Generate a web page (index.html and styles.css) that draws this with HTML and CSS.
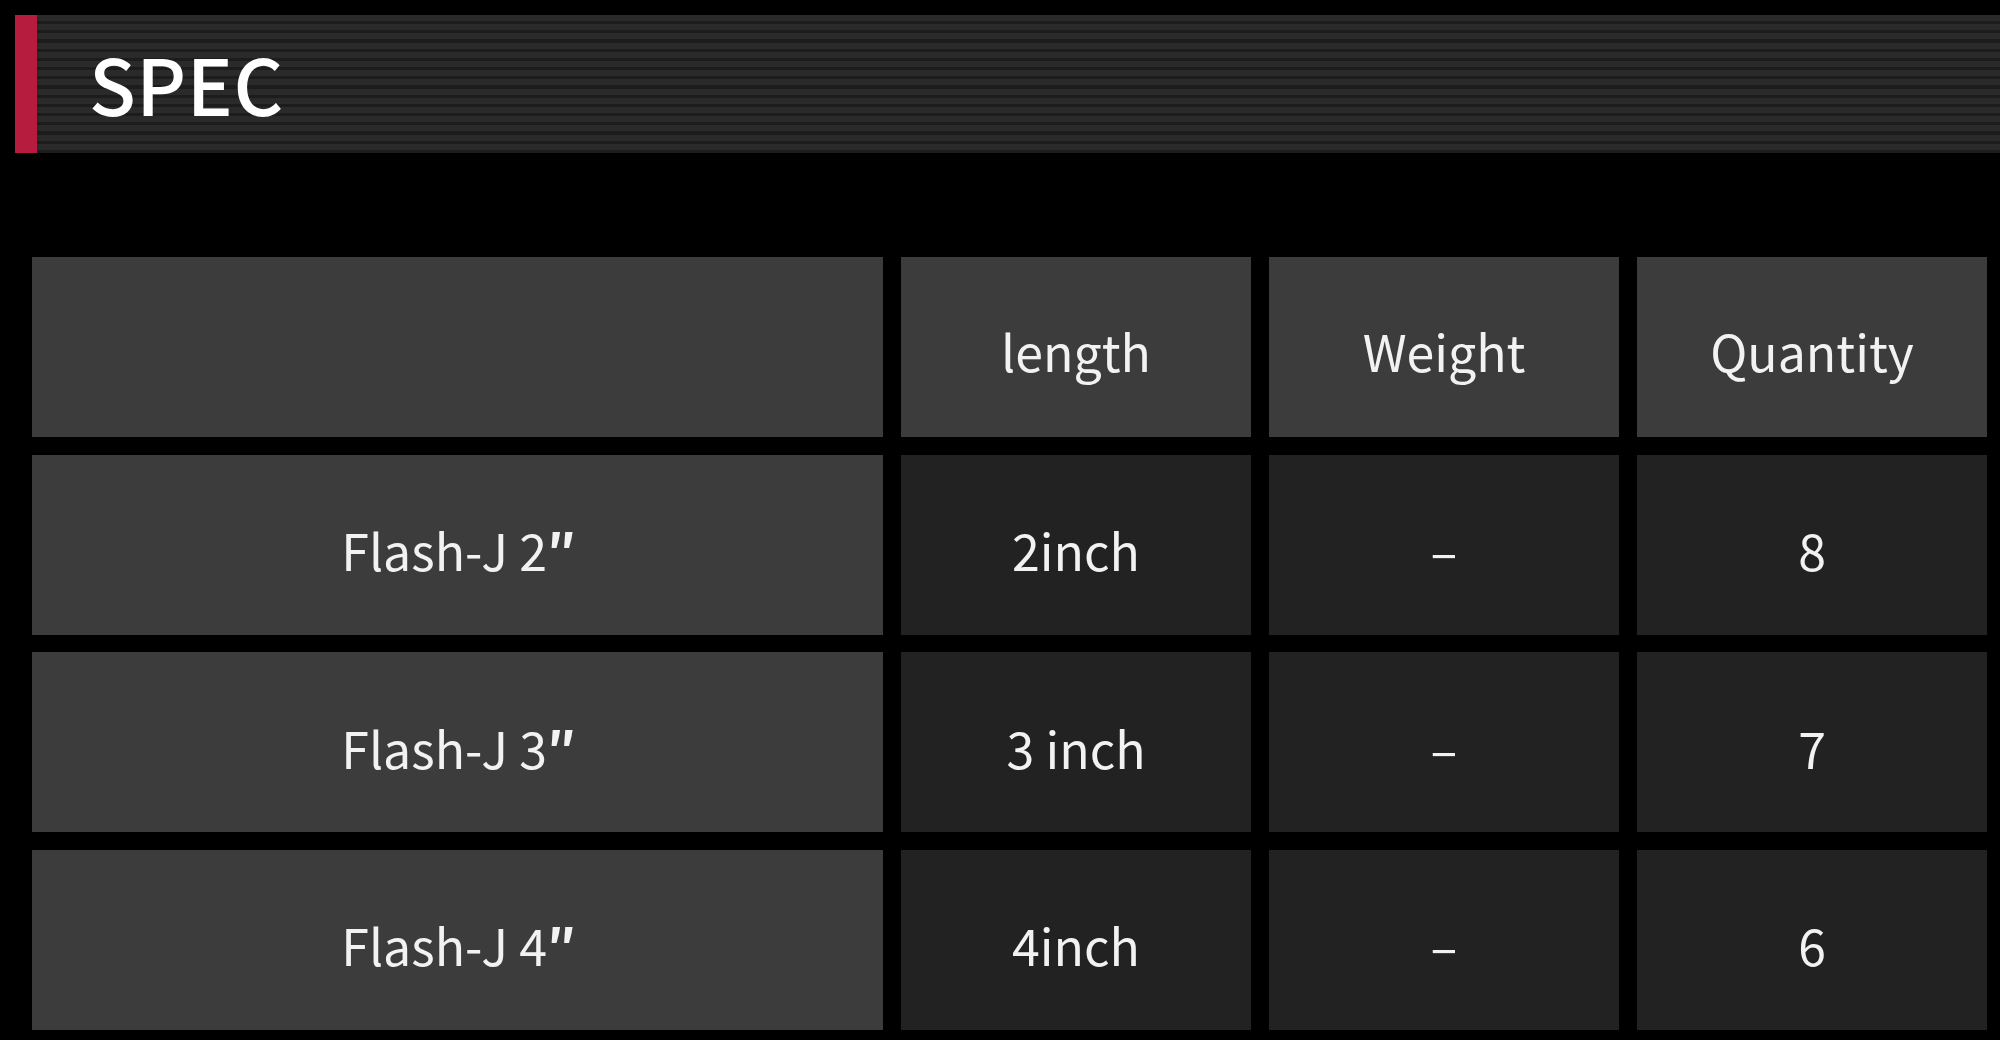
FILE: index.html
```html
<!DOCTYPE html>
<html lang="en">
<head>
<meta charset="utf-8">
<title>SPEC</title>
<link rel="stylesheet" href="styles.css">
</head>
<body>
<div class="page">
  <div class="heading">
    <div class="heading-mark"></div>
    <h2 class="heading-title">SPEC</h2>
  </div>
  <div class="spec-table">
    <div class="cell head"></div>
    <div class="cell head">length</div>
    <div class="cell head">Weight</div>
    <div class="cell head">Quantity</div>

    <div class="cell name">Flash-J 2<span class="prime">″</span></div>
    <div class="cell data">2inch</div>
    <div class="cell data">–</div>
    <div class="cell data">8</div>

    <div class="cell name">Flash-J 3<span class="prime">″</span></div>
    <div class="cell data">3 inch</div>
    <div class="cell data">–</div>
    <div class="cell data">7</div>

    <div class="cell name">Flash-J 4<span class="prime">″</span></div>
    <div class="cell data">4inch</div>
    <div class="cell data">–</div>
    <div class="cell data">6</div>
  </div>
</div>
</body>
</html>
```
FILE: styles.css
```css
html, body {
  margin: 0;
  padding: 0;
  background: #000;
}
body {
  font-family: "Noto Sans CJK JP", "Noto Sans", sans-serif;
  color: #f2f2f2;
}
.page {
  padding-top: 15px;
}
.heading {
  display: flex;
  align-items: stretch;
  margin-left: 15px;
  height: 138px;
  background: repeating-linear-gradient(to bottom, #2a2a2a 0px, #2a2a2a 6px, #1c1c1c 6px, #1c1c1c 9.2px);
}
.heading-mark {
  width: 22px;
  background: #b51c3d;
}
.heading-title {
  margin: 0 0 0 52px;
  align-self: center;
  font-size: 77px;
  font-weight: 500;
  line-height: 1;
  color: #fff;
  letter-spacing: 0.5px;
  padding-bottom: 4px;
}
.spec-table {
  display: grid;
  grid-template-columns: 851px 350px 350px 350px;
  grid-auto-rows: 180px;
  column-gap: 18px;
  row-gap: 17.5px;
  margin: 104px 0 0 32px;
}
.cell {
  display: flex;
  align-items: center;
  justify-content: center;
  font-size: 50px;
  padding-top: 6px;
  box-sizing: border-box;
}
.head {
  background: #3c3c3c;
}
.name {
  background: #3c3c3c;
  padding-top: 9px;
}
.data {
  background: #222;
  padding-top: 9px;
}
.prime {
  font-weight: 700;
  letter-spacing: -2px;
}
```
